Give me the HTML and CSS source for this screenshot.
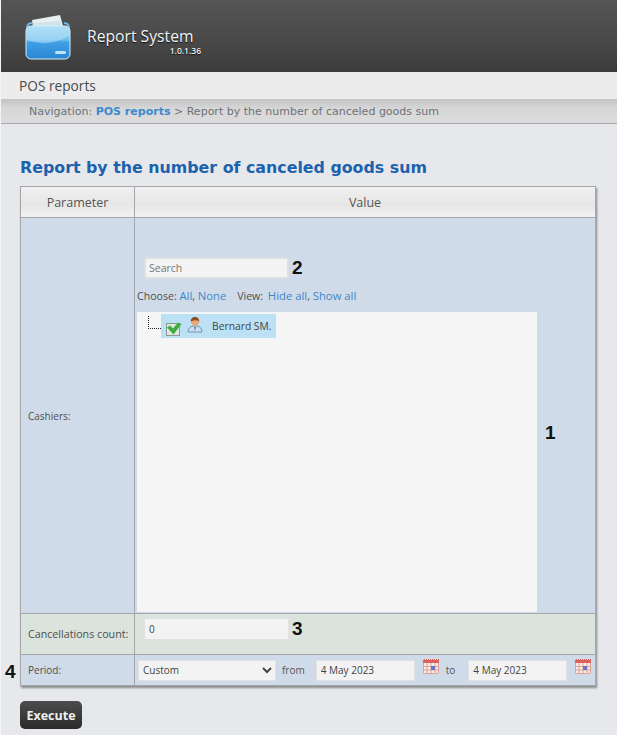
FILE: index.html
```html
<!DOCTYPE html>
<html lang="en">
<head>
<meta charset="utf-8">
<title>Report System</title>
<link rel="stylesheet" href="styles.css">
</head>
<body>
<div class="page">
  <header class="top">
    <svg class="logo" width="46" height="48" viewBox="0 0 46 48">
      <defs>
        <linearGradient id="fold" x1="0" y1="0" x2="0" y2="1">
          <stop offset="0" stop-color="#a9dcf7"/><stop offset="0.42" stop-color="#6fbdee"/><stop offset="0.5" stop-color="#3f9fe4"/><stop offset="1" stop-color="#2a86d4"/>
        </linearGradient>
      </defs>
      <path d="M7 8 L35 3 L38 14 L8 16Z" fill="#e9eef0"/>
      <path d="M8 11 L36 9 L36 16 L8 16Z" fill="#cfe3ea"/>
      <path d="M2 16 Q2 11 7 11 M39 11 Q44 11 44 16" fill="none" stroke="#6db7e3" stroke-width="2"/>
      <rect x="1" y="14" width="44" height="33" rx="5" fill="url(#fold)" stroke="#d5effc" stroke-width="1"/>
      <path d="M2 28 Q22 36 44 24 L44 18 Q44 15 41 15 L5 15 Q2 15 2 18Z" fill="#b9e2f8" opacity="0.55"/>
      <rect x="30" y="39" width="11" height="3" rx="1.5" fill="#bfe4f8"/>
    </svg>
    <div class="brand">
      <div class="brand-name">Report System</div>
      <div class="brand-version">1.0.1.36</div>
    </div>
  </header>
  <div class="section">POS reports</div>
  <nav class="crumbs">Navigation: <a class="crumb-link">POS reports</a> &gt; Report by the number of canceled goods sum</nav>
  <main class="content">
    <h1 class="title">Report by the number of canceled goods sum</h1>
    <div class="table-wrap">
      <span class="mark mark-one">1</span>
      <span class="mark mark-four">4</span>
      <table class="report">
        <thead>
          <tr class="head-row"><th class="col-a">Parameter</th><th>Value</th></tr>
        </thead>
        <tbody>
          <tr class="row-cashiers">
            <td class="label">Cashiers:</td>
            <td class="value">
              <div class="field-line search-line">
                <input class="text-input search" type="text" placeholder="Search">
                <span class="mark-inline">2</span>
              </div>
              <div class="choose">Choose: <a>All</a>, <a>None</a> <span class="view">View:</span> <a>Hide all</a>, <a>Show all</a></div>
              <div class="tree">
                <span class="dots"></span>
                <div class="tree-item">
                  <svg class="check" width="16" height="15" viewBox="0 0 16 15">
                    <rect x="0.5" y="2.5" width="13" height="12" fill="#dfe8e2" stroke="#8a9a90"/>
                    <path d="M1 6.5 L4 4.5 L7 7.5 L12 1.5 L15.5 3 L7.5 13.5Z" fill="#3fae3c"/>
                  </svg>
                  <svg class="user" width="16" height="17" viewBox="0 0 16 17">
                    <path d="M1 16 Q1 11 6 10 L10 10 Q15 11 15 16Z" fill="#c9dff0" stroke="#6f93ae"/>
                    <path d="M7 11 L8 15 L9 11Z" fill="#4a7aa2"/>
                    <circle cx="8" cy="5.5" r="4.2" fill="#e8a878"/>
                    <path d="M3.8 5.5 Q3.8 1 8 1 Q12.2 1 12.2 5.5 Q9 3 3.8 5.5Z" fill="#8f4f20"/>
                  </svg>
                  <span class="tree-name">Bernard SM.</span>
                </div>
              </div>
            </td>
          </tr>
          <tr class="row-count">
            <td class="label label-count">Cancellations count:</td>
            <td class="value">
              <div class="field-line count-line">
                <input class="text-input count" type="text" value="0">
                <span class="mark-inline">3</span>
              </div>
            </td>
          </tr>
          <tr class="row-period">
            <td class="label">Period:</td>
            <td class="value value-mid">
              <div class="period">
                <select class="period-select"><option>Custom</option></select>
                <span class="word word-from">from</span>
                <input class="text-input date" type="text" value="4 May 2023">
                <svg class="cal" width="16" height="15" viewBox="0 0 16 15"><use href="#cal-icon"/></svg>
                <span class="word word-to">to</span>
                <input class="text-input date" type="text" value="4 May 2023">
                <svg class="cal" width="16" height="15" viewBox="0 0 16 15"><use href="#cal-icon"/></svg>
              </div>
            </td>
          </tr>
        </tbody>
      </table>
    </div>
    <button class="execute" type="button">Execute</button>
  </main>
</div>
<svg width="0" height="0" class="defs">
  <symbol id="cal-icon" viewBox="0 0 16 15">
    <rect x="0" y="0" width="16" height="15" fill="#f6ece8"/>
    <rect x="0" y="0" width="16" height="4" fill="#d9635c"/>
    <path d="M0 0.5 H16" stroke="#f5d5d0" stroke-dasharray="1 1"/>
    <path d="M0.5 4 V14.5 H15.5 V4 M0 7.5 H16 M0 11 H16 M4 4 V15 M8 4 V15 M12 4 V15" fill="none" stroke="#e0a09a" stroke-width="1"/>
    <rect x="8" y="7" width="4" height="4" fill="#6a78c0"/>
  </symbol>
</svg>
</body>
</html>
```
FILE: styles.css
```css
* { box-sizing: border-box; }
html, body { margin: 0; padding: 0; }
body {
  background: #e6e8ec;
  font-family: Tahoma, "DejaVu Sans", sans-serif;
  color: #555;
  height: 735px;
  overflow: hidden;
}
.page { border-left: 1px solid #f4f4f5; height: 735px; }
.defs { position: absolute; }

.top {
  height: 72px;
  background: linear-gradient(#555 0%, #4a4a4a 50%, #3c3c3c 100%);
  display: flex;
  align-items: flex-start;
  padding: 12px 0 0 24px;
}
.logo { flex: none; }
.brand { margin: 15px 0 0 16px; width: 114px; }
.brand-name {
  font-family: "Open Sans", sans-serif;
  font-size: 15.7px;
  line-height: 18px;
  color: #f4f4f4;
  text-shadow: 0 1px 1px #111;
}
.brand-version {
  font-family: "Open Sans", sans-serif;
  font-size: 8.5px;
  font-weight: 600;
  line-height: 8px;
  margin-top: 2px;
  color: #eee;
  text-align: right;
  text-shadow: 0 1px 1px #111;
}
.section {
  height: 27px;
  background: #ececec;
  font-family: "Open Sans", sans-serif;
  font-size: 13.7px;
  line-height: 27px;
  padding-left: 18px;
  color: #4a4a4a;
}
.crumbs {
  height: 25px;
  background: linear-gradient(#c4c4c4, #d7d7d7 40%, #dcdcdc);
  border-bottom: 1px solid #a9a9a9;
  font-family: "DejaVu Sans", sans-serif;
  font-size: 11.03px;
  line-height: 25px;
  padding-left: 28px;
  color: #6d7278;
}
.crumb-link { color: #3c8ad0; font-weight: bold; }
.content { padding: 34px 0 0 19px; }
.title {
  margin: 0 0 8px;
  font-family: "DejaVu Sans", sans-serif;
  font-size: 15.84px;
  line-height: 20px;
  font-weight: bold;
  color: #1c62ad;
}
.table-wrap { position: relative; width: 576px; }
.report {
  width: 576px;
  height: 499px;
  table-layout: fixed;
  border-collapse: collapse;
  box-shadow: 1px 2px 2px #8a8a8a;
  font-family: "Open Sans", sans-serif;
  font-size: 10px;
}
.report th, .report td { border: 1px solid #a3a7aa; padding: 0; }
.col-a { width: 114px; }
.head-row { height: 31px; }
.head-row th {
  background: linear-gradient(#f0f0f0, #e6e6e6 55%, #f2f2f2);
  font-family: "Open Sans", sans-serif;
  font-weight: 400;
  font-size: 12.5px;
  color: #555;
}
.row-cashiers { height: 396px; background: #cfdbe8; }
.row-count { height: 41px; background: #dae3dc; }
.row-period { height: 31px; background: #cfdbe8; }
.label { padding-left: 7px !important; color: #4f4f4f; font-size: 10px; }
.label-count { font-size: 10.7px; }
.value { vertical-align: top; }
.value-mid { vertical-align: middle; }
.field-line { display: flex; align-items: center; }
.search-line { margin: 39px 0 0 9px; }
.count-line { margin: 4px 0 0 9px; }
.text-input {
  border: 1px solid #e2e2e2;
  background: #f3f3f3;
  font-family: "Open Sans", sans-serif;
  font-size: 10px;
  color: #444;
  padding: 0 4px;
  outline: none;
  border-radius: 0;
}
.search {
  width: 145px;
  height: 22px;
  border: 2px solid #dcdfe3;
  border-radius: 3px;
  padding: 0 3px;
  font-size: 10.5px;
}
.search::placeholder { color: #777; opacity: 1; }
.count { width: 145px; height: 22px; }
.mark-inline, .mark {
  font-family: "Liberation Sans", sans-serif;
  font-weight: bold;
  font-size: 19px;
  color: #111;
}
.mark-inline { margin-left: 3px; }
.mark { position: absolute; line-height: 20px; }
.mark-one { left: 525px; top: 237px; }
.mark-four { left: -15px; top: 476px; }
.choose {
  margin: 10px 0 0 2px;
  line-height: 14px;
  color: #4f4f4f;
  font-size: 10.6px;
}
.choose a { color: #3d87c9; font-size: 11.3px; }
.view { margin: 0 2px 0 8px; }
.tree {
  position: relative;
  margin: 9px 0 0 2px;
  width: 400px;
  height: 300px;
  background: #f5f5f6;
  padding: 2px 0 0 24px;
}
.dots {
  position: absolute;
  left: 11px;
  top: 4px;
  width: 13px;
  height: 13px;
  border-left: 1px dotted #222;
  border-bottom: 1px dotted #222;
}
.tree-item {
  display: flex;
  align-items: center;
  width: 115px;
  height: 24px;
  background: #bce1f4;
  padding-left: 5px;
  color: #444;
  font-size: 10.3px;
}
.check { flex: none; margin-top: 5px; }
.user { flex: none; margin: -3px 0 0 5px; }
.tree-name { margin-left: 9px; white-space: nowrap; }
.period { display: flex; align-items: center; padding-left: 3px; }
.period-select {
  width: 138px;
  height: 21px;
  border: 1px solid #e2e2e2;
  background: #f3f3f3;
  font-family: "Open Sans", sans-serif;
  font-size: 10px;
  color: #444;
  padding-left: 0;
  border-radius: 0;
}
.word { font-size: 10px; color: #555; }
.word-from { margin: 0 11px 0 6px; }
.word-to { margin: 0 13px 0 7px; }
.date { width: 99px; height: 21px; }
.cal { flex: none; margin: -8px 0 0 8px; }
.execute {
  display: block;
  margin-top: 15px;
  width: 62px;
  height: 28px;
  border: 0;
  border-radius: 5px;
  background: linear-gradient(#4d4d4d, #2a2a2a);
  color: #f0f0f0;
  font-family: "Open Sans", sans-serif;
  font-weight: 700;
  font-size: 12.5px;
  padding: 0;
}
```
